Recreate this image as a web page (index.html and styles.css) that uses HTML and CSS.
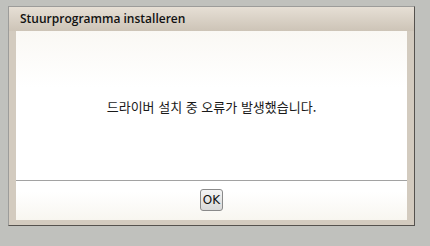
FILE: index.html
```html
<!DOCTYPE html>
<html lang="ko">
<head>
  <meta charset="UTF-8" />
  <meta name="viewport" content="width=device-width, initial-scale=1.0" />
  <title>Stuurprogramma installeren</title>
  <link rel="stylesheet" href="styles.css">
</head>
<body>
  <div class="dialog">
    <div class="titlebar">Stuurprogramma installeren</div>
    <div class="panel">
      <div class="message">드라이버 설치 중 오류가 발생했습니다.</div>
      <div class="actions">
        <button type="button" class="ok">OK</button>
      </div>
    </div>
  </div>
</body>
</html>
```

FILE: styles.css
```css
body {
  margin: 0;
  padding: 6px 0 0 8px;
  background: #c0c1bd;
  font-family: "Open Sans", "Noto Sans", sans-serif;
}

.dialog {
  width: 405px;
  height: 218px;
  display: flex;
  flex-direction: column;
  background: #d3cbbf;
  border: 1px solid;
  border-color: #9c9c9a #55524e #55524e #9c9c9a;
}

.titlebar {
  height: 24px;
  line-height: 23px;
  padding-left: 11px;
  font-size: 12px;
  font-weight: 600;
  color: #111;
  background: linear-gradient(#e6dfd5, #cdc4b7);
}

.panel {
  flex: 1;
  margin: 0 7px 5px 7px;
  display: flex;
  flex-direction: column;
  background: linear-gradient(#faf8f4, #ffffff 30%, #ffffff 85%, #f8f6f0);
}

.message {
  height: 150px;
  display: flex;
  align-items: center;
  justify-content: center;
  padding-top: 1px;
  box-sizing: border-box;
  font-family: "Noto Sans CJK KR", sans-serif;
  font-size: 13px;
  color: #1a1a1a;
  border-bottom: 1px solid #a2a2a2;
}

.actions {
  flex: 1;
  display: flex;
  justify-content: center;
  padding-top: 8px;
}

.ok {
  width: 23px;
  height: 22px;
  padding: 0;
  font-family: "DejaVu Sans", sans-serif;
  font-size: 12px;
  color: #111;
  border: 1px solid #8a8a8a;
  border-radius: 3px;
  background: linear-gradient(#f4f4f4, #d9d9d9);
  cursor: pointer;
}
```
